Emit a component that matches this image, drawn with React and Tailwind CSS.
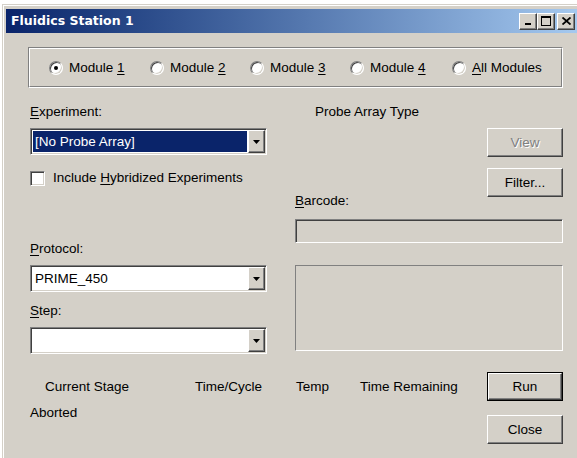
import React from "react";

// Classic 3D edge styles
const raised =
  "border border-t-white border-l-white border-r-[#404040] border-b-[#404040] shadow-[inset_-1px_-1px_0_#808080]";
const sunken =
  "border border-t-[#808080] border-l-[#808080] border-r-white border-b-white shadow-[inset_1px_1px_0_#404040,inset_-1px_-1px_0_#d4d0c8]";

function U({ children }) {
  return <span className="underline underline-offset-[2px] decoration-1">{children}</span>;
}

function DownArrow() {
  return (
    <svg width="7" height="4" viewBox="0 0 7 4">
      <polygon points="0,0 7,0 3.5,4" fill="#000" />
    </svg>
  );
}

function Combo({ value, selected }) {
  return (
    <div className={`flex h-[27px] w-full bg-white p-[1px] ${sunken}`}>
      <div className="flex flex-1 items-center p-[1px]">
        {value ? (
          <div
            className={`flex h-full w-full items-center pl-[2px] ${
              selected ? "bg-[#0a246a] text-white" : "text-black"
            }`}
          >
            {value}
          </div>
        ) : null}
      </div>
      <div className={`flex w-[17px] items-center justify-center bg-[#d4d0c8] ${raised}`}>
        <DownArrow />
      </div>
    </div>
  );
}

function Button({ children, disabled, isDefault }) {
  const inner = (
    <div
      className={`flex h-full w-full items-center justify-center bg-[#d4d0c8] ${raised} ${
        disabled ? "text-[#808080] [text-shadow:1px_1px_0_#fff]" : "text-black"
      }`}
    >
      {children}
    </div>
  );
  if (isDefault) {
    return <div className="h-[29px] w-[76px] border border-black">{inner}</div>;
  }
  return <div className="h-[29px] w-[76px]">{inner}</div>;
}

function Radio({ checked, label, width }) {
  return (
    <div className={`flex items-center ${width}`}>
      <div className="flex h-[14px] w-[14px] items-center justify-center rounded-full border border-t-[#808080] border-l-[#808080] border-r-white border-b-white bg-white shadow-[inset_1px_1px_0_#404040,inset_-1px_-1px_0_#d4d0c8]">
        {checked ? <div className="h-[4px] w-[4px] rounded-full bg-black" /> : null}
      </div>
      <span className="ml-[6px]">{label}</span>
    </div>
  );
}

function TitleButton({ children, className = "" }) {
  return (
    <div
      className={`flex h-[17px] w-[18px] items-center justify-center bg-[#d4d0c8] ${raised} ${className}`}
    >
      {children}
    </div>
  );
}

export default function App() {
  return (
    <div className="h-[458px] w-[577px] overflow-hidden bg-white pl-[2px] pt-[4px] font-['Liberation_Sans',Arial,sans-serif] text-[13.5px] leading-4 text-black">
      <div className="h-[460px] w-[580px] border-l border-t border-[#d4d0c8] bg-[#d4d0c8]">
        <div className="h-full w-full border-l border-t border-white p-[2px] pt-[3px]">
          {/* Title bar */}
          <div className="flex h-[24px] items-center bg-gradient-to-r from-[#0a246a] to-[#a6caf0] pl-[5px] pr-[5px]">
            <span className="flex-1 font-['DejaVu_Sans',sans-serif] text-[12.5px] font-bold text-white">
              Fluidics Station 1
            </span>
            <TitleButton>
              <svg width="8" height="9" viewBox="0 0 8 9">
                <rect x="1" y="6" width="6" height="2" fill="#000" />
              </svg>
            </TitleButton>
            <TitleButton>
              <svg width="10" height="10" viewBox="0 0 10 10">
                <rect x="0.5" y="0.5" width="9" height="9" fill="none" stroke="#000" />
                <rect x="0" y="0" width="10" height="2" fill="#000" />
              </svg>
            </TitleButton>
            <TitleButton className="ml-[2px]">
              <svg width="9" height="8" viewBox="0 0 9 8">
                <path d="M0.5 0.5 L8.5 7.5 M8.5 0.5 L0.5 7.5" stroke="#000" strokeWidth="1.8" />
              </svg>
            </TitleButton>
          </div>

          {/* Dialog body */}
          <div className="pl-[22px] pr-[17px]">
            {/* Module selector */}
            <div className="mt-[14px] h-[41px] border border-t-[#808080] border-l-[#808080] border-r-white border-b-white">
              <div className="flex h-full items-center border border-t-white border-l-white border-r-[#808080] border-b-[#808080] pl-[19px]">
                <Radio checked width="w-[101px]" label={<>Module <U>1</U></>} />
                <Radio width="w-[100px]" label={<>Module <U>2</U></>} />
                <Radio width="w-[100px]" label={<>Module <U>3</U></>} />
                <Radio width="w-[102px]" label={<>Module <U>4</U></>} />
                <Radio label={<><U>A</U>ll Modules</>} />
              </div>
            </div>

            {/* Two columns */}
            <div className="mt-[16px] flex pl-[2px]">
              <div className="flex w-[237px] flex-col">
                <div>
                  <U>E</U>xperiment:
                </div>
                <div className="mt-[8px]">
                  <Combo value="[No Probe Array]" selected />
                </div>
                <div className="mt-[15px] flex items-center">
                  <div className={`h-[15px] w-[15px] bg-white ${sunken}`} />
                  <span className="ml-[8px]">
                    Include <U>H</U>ybridized Experiments
                  </span>
                </div>
                <div className="mt-[55px]">
                  <U>P</U>rotocol:
                </div>
                <div className="mt-[8px]">
                  <Combo value="PRIME_450" />
                </div>
                <div className="mt-[11px]">
                  <U>S</U>tep:
                </div>
                <div className="mt-[8px]">
                  <Combo />
                </div>
              </div>

              <div className="ml-[28px] flex w-[268px] flex-col">
                <div className="pl-[20px]">Probe Array Type</div>
                <div className="mt-[8px] self-end">
                  <Button disabled>View</Button>
                </div>
                <div className="mt-[11px] flex items-start justify-between">
                  <div className="mt-[25px]">
                    <U>B</U>arcode:
                  </div>
                  <Button>Filter...</Button>
                </div>
                <div className={`mt-[10px] h-[24px] bg-[#d4d0c8] ${sunken}`} />
                <div className="mt-[22px] h-[86px] border border-t-[#808080] border-l-[#808080] border-r-white border-b-white" />
              </div>
            </div>

            {/* Status and actions */}
            <div className="mt-[18px] flex pl-[2px]">
              <div className="flex flex-1 flex-col">
                <div className="flex h-[29px] items-center">
                  <span className="ml-[15px] w-[150px]">Current Stage</span>
                  <span className="w-[101px]">Time/Cycle</span>
                  <span className="w-[64px]">Temp</span>
                  <span>Time Remaining</span>
                </div>
                <div className="mt-[4px]">Aborted</div>
              </div>
              <div className="flex flex-col">
                <Button isDefault>Run</Button>
                <div className="mt-[14px]">
                  <Button>Close</Button>
                </div>
              </div>
            </div>
          </div>
        </div>
      </div>
    </div>
  );
}
